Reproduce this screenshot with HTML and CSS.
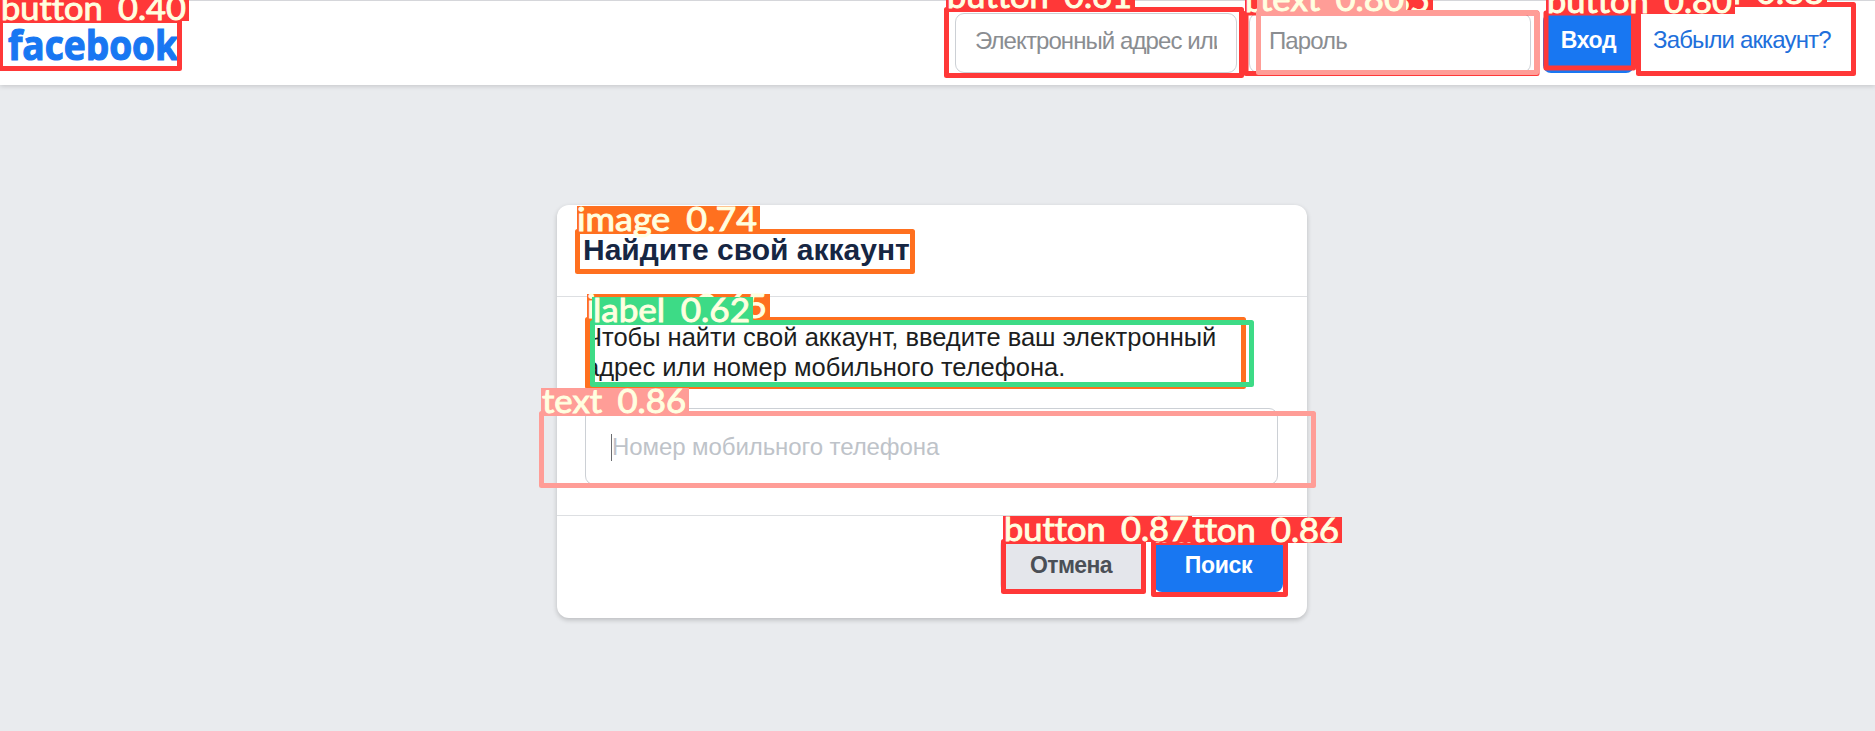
FILE: index.html
```html
<!DOCTYPE html>
<html lang="ru">
<head>
<meta charset="utf-8">
<title>Найдите свой аккаунт</title>
<link rel="stylesheet" href="styles.css">
</head>
<body>
<header class="topbar">
  <svg class="logo" width="180" height="54"><text x="8" y="44" textLength="170" lengthAdjust="spacingAndGlyphs">facebook</text></svg>
  <form class="login">
    <div class="field"><span>Электронный адрес или</span></div>
    <div class="field"><span>Пароль</span></div>
    <button class="btn enter" type="button">Вход</button>
    <a class="forgot">Забыли аккаунт?</a>
  </form>
</header>
<main class="card">
  <h1 class="title">Найдите свой аккаунт</h1>
  <section class="content">
    <p class="hint">Чтобы найти свой аккаунт, введите ваш электронный<br>адрес или номер мобильного телефона.</p>
    <div class="phone"><i class="caret"></i><span>Номер мобильного телефона</span></div>
  </section>
  <footer class="actions">
    <button class="btn cancel" type="button">Отмена</button>
    <button class="btn search" type="button">Поиск</button>
  </footer>
</main>
<svg class="detections" width="1875" height="731" viewBox="0 0 1875 731">
  <g class="red">
    <rect class="box" x="0.5" y="20.5" width="179" height="48"/>
    <rect class="tag" x="0" y="-4" width="189" height="25"/>
    <text x="1" y="20" textLength="185" lengthAdjust="spacingAndGlyphs">button 0.40</text>
    <rect class="box" x="946.5" y="9.5" width="295" height="66"/>
    <rect class="tag" x="946" y="-16" width="189" height="25"/>
    <text x="947" y="8" textLength="185" lengthAdjust="spacingAndGlyphs">button 0.61</text>
    <rect class="box" x="1638.5" y="4.5" width="215" height="69"/>
    <rect class="tag" x="1638" y="-20" width="189" height="25"/>
    <text x="1639" y="3.5" textLength="185" lengthAdjust="spacingAndGlyphs">button 0.88</text>
    <rect class="box" x="1246" y="13" width="291" height="60.5"/>
    <rect class="tag" x="1245" y="-12" width="188" height="25"/>
    <text x="1245" y="12" textLength="185" lengthAdjust="spacingAndGlyphs">button 0.85</text>
    <rect class="box" x="1546" y="13" width="87.5" height="55"/>
    <rect class="tag" x="1546" y="-11" width="189" height="25"/>
    <text x="1547" y="12.5" textLength="185" lengthAdjust="spacingAndGlyphs">button 0.80</text>
  </g>
  <g class="pink">
    <rect class="box" x="1258.5" y="12.5" width="278" height="60"/>
    <rect class="tag" x="1257" y="-14" width="149" height="25"/>
    <text x="1260" y="11" textLength="144" lengthAdjust="spacingAndGlyphs">text 0.80</text>
  </g>
  <g class="orange">
    <rect class="box" x="577.5" y="231.5" width="335" height="40"/>
    <rect class="tag" x="577" y="206" width="183" height="25"/>
    <text x="577" y="230.5" textLength="180" lengthAdjust="spacingAndGlyphs">image 0.74</text>
    <rect class="box" x="587.5" y="319.5" width="656" height="67"/>
    <rect class="tag" x="587" y="294" width="183" height="25"/>
    <text x="587" y="318" textLength="180" lengthAdjust="spacingAndGlyphs">image 0.65</text>
  </g>
  <g class="green">
    <rect class="box" x="592.5" y="322.5" width="659" height="62"/>
    <rect class="tag" x="592" y="297" width="161" height="25"/>
    <text x="593" y="321.5" textLength="157" lengthAdjust="spacingAndGlyphs">label 0.62</text>
  </g>
  <g class="pink">
    <rect class="box" x="541.5" y="413.5" width="772" height="72"/>
    <rect class="tag" x="541" y="388" width="148" height="25"/>
    <text x="542" y="412.5" textLength="144" lengthAdjust="spacingAndGlyphs">text 0.86</text>
  </g>
  <g class="red">
    <rect class="box" x="1153.5" y="542.5" width="132" height="52"/>
    <rect class="tag" x="1153" y="517" width="189" height="26"/>
    <text x="1154" y="541.5" textLength="185" lengthAdjust="spacingAndGlyphs">button 0.86</text>
    <rect class="box" x="1003.5" y="541.5" width="140" height="50"/>
    <rect class="tag" x="1003" y="516" width="189" height="26"/>
    <text x="1004" y="541" textLength="185" lengthAdjust="spacingAndGlyphs">button 0.87</text>
  </g>
</svg>
</body>
</html>
```
FILE: styles.css
```css
* { box-sizing: border-box; }
body {
  margin: 0;
  height: 731px;
  overflow: hidden;
  background: #e9ebee;
  font-family: "Liberation Sans", Arial, sans-serif;
  position: relative;
}
.topbar {
  height: 85px;
  display: flex;
  justify-content: space-between;
  background: #fff;
  border-top: 1px solid #d5d6da;
  box-shadow: 0 1px 5px rgba(0,0,0,.17);
}
.logo { margin-top: 15px; }
.logo text {
  font: 700 42px "Open Sans", sans-serif;
  fill: #1877f2;
  stroke: #1877f2;
  stroke-width: 1.2;
}
.login {
  display: flex;
  align-items: flex-start;
  padding: 12px 43px 0 0;
}
.field {
  width: 282px;
  height: 60px;
  margin-right: 12px;
  padding: 0 19px;
  border: 1px solid #ccd0d5;
  border-radius: 9px;
  font-size: 24px;
  letter-spacing: -.92px;
  line-height: 54px;
  color: #8a8d91;
}
.field span { display: block; overflow: hidden; white-space: nowrap; }
.btn {
  padding: 0;
  border: 0;
  border-radius: 8px;
  color: #fff;
  background: #1877f2;
  font: bold 23px "Liberation Sans", Arial, sans-serif;
  letter-spacing: -.3px;
}
.enter { width: 91px; height: 60px; padding-bottom: 6px; }
.forgot { width: 179px; margin-left: 19px; font-size: 24px; letter-spacing: -.85px; line-height: 53px; color: #216fdb; white-space: nowrap; }
.card {
  width: 750px;
  height: 413px;
  margin: 120px 0 0 557px;
  background: #fff;
  border-radius: 12px;
  box-shadow: 0 2px 5px rgba(0,0,0,.2);
}
.title {
  margin: 0;
  height: 92px;
  padding: 25px 0 0 26px;
  border-bottom: 1px solid #dddfe2;
  font-size: 30px;
  line-height: 40px;
  color: #162643;
  white-space: nowrap;
}
.content { height: 219px; padding: 25px 28px 0; border-bottom: 1px solid #dddfe2; }
.hint { margin: 0; font-size: 25.5px; line-height: 30px; color: #1c1e21; white-space: nowrap; }
.phone {
  display: flex;
  align-items: flex-start;
  width: 693px;
  height: 77px;
  margin-top: 26px;
  padding: 22px 25px;
  border: 1px solid #ccd0d5;
  border-radius: 9px;
  font-size: 24px;
  letter-spacing: -.08px;
  line-height: 32px;
  color: #bec3c9;
}
.caret { width: 1px; height: 27px; margin-top: 3px; background: #6b6d70; }
.actions { display: flex; justify-content: flex-end; gap: 8px; padding: 22px 24px 0 0; }
.cancel { width: 146px; height: 54px; padding-right: 4px; background: #e4e6eb; color: #4b4f56; letter-spacing: -.6px; }
.search { width: 129px; height: 54px; }
.detections { position: absolute; left: 0; top: 0; }
.box { fill: none; stroke-width: 5; stroke-linejoin: round; }
.detections text {
  font: 400 32px Lato, sans-serif;
  font-variant-ligatures: none;
  word-spacing: 6px;
  fill: #ffffe0;
  stroke: #ffffe0;
  stroke-width: .9;
}
.red .box { stroke: #ff3838; }
.red .tag { fill: #ff3838; }
.pink .box { stroke: #ff9d97; }
.pink .tag { fill: #ff9d97; }
.orange .box { stroke: #ff701f; }
.orange .tag { fill: #ff701f; }
.green .box { stroke: #3ddb86; }
.green .tag { fill: #3ddb86; }
```
